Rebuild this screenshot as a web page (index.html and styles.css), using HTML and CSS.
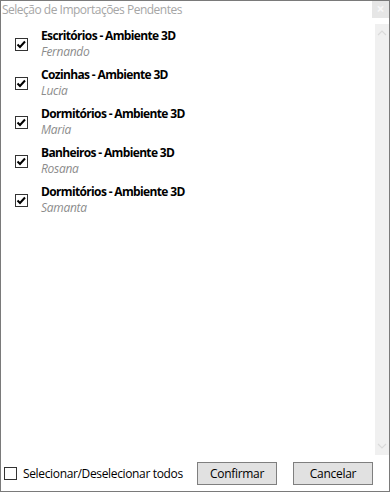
FILE: index.html
```html
<!DOCTYPE html>
<html lang="pt">
<head>
<meta charset="utf-8">
<title>Seleção de Importações Pendentes</title>
<link rel="stylesheet" href="styles.css">
</head>
<body>
<div class="window">
  <div class="titlebar">
    <div class="title">Seleção de Importações Pendentes</div>
    <div class="close">×</div>
  </div>
  <div class="content">
    <div class="list">
      <div class="item">
        <span class="cb checked"><svg viewBox="0 0 13 13" width="13" height="13"><polyline points="2.5,6.5 5,9 10,3.5" /></svg></span>
        <div class="texts"><div class="name">Escritórios - Ambiente 3D</div><div class="user">Fernando</div></div>
      </div>
      <div class="item">
        <span class="cb checked"><svg viewBox="0 0 13 13" width="13" height="13"><polyline points="2.5,6.5 5,9 10,3.5" /></svg></span>
        <div class="texts"><div class="name">Cozinhas - Ambiente 3D</div><div class="user">Lucia</div></div>
      </div>
      <div class="item">
        <span class="cb checked"><svg viewBox="0 0 13 13" width="13" height="13"><polyline points="2.5,6.5 5,9 10,3.5" /></svg></span>
        <div class="texts"><div class="name">Dormitórios - Ambiente 3D</div><div class="user">Maria</div></div>
      </div>
      <div class="item">
        <span class="cb checked"><svg viewBox="0 0 13 13" width="13" height="13"><polyline points="2.5,6.5 5,9 10,3.5" /></svg></span>
        <div class="texts"><div class="name">Banheiros - Ambiente 3D</div><div class="user">Rosana</div></div>
      </div>
      <div class="item">
        <span class="cb checked"><svg viewBox="0 0 13 13" width="13" height="13"><polyline points="2.5,6.5 5,9 10,3.5" /></svg></span>
        <div class="texts"><div class="name">Dormitórios - Ambiente 3D</div><div class="user">Samanta</div></div>
      </div>
    </div>
    <div class="scrollbar">
      <svg class="arrow" viewBox="0 0 14 10" width="14" height="10"><polyline points="3,7 7,3 11,7" /></svg>
      <svg class="arrow" viewBox="0 0 14 10" width="14" height="10"><polyline points="3,3 7,7 11,3" /></svg>
    </div>
  </div>
  <div class="footer">
    <label class="all"><span class="cb"></span><span>Selecionar/Deselecionar todos</span></label>
    <div class="buttons">
      <button class="btn">Confirmar</button>
      <button class="btn">Cancelar</button>
    </div>
  </div>
</div>
</body>
</html>
```
FILE: styles.css
```css
html, body {
  margin: 0;
  padding: 0;
  background: #ffffff;
}
.window {
  width: 390px;
  height: 492px;
  box-sizing: border-box;
  border: 1px solid #7a7a7a;
  background: #ffffff;
  display: flex;
  flex-direction: column;
  font-family: "Open Sans", "Noto Sans", sans-serif;
  font-size: 12px;
  color: #000;
}
.titlebar {
  display: flex;
  justify-content: space-between;
  align-items: flex-start;
  height: 22px;
  flex: none;
}
.title {
  color: #a6a6a6;
  line-height: 16px;
  padding: 1px 0 0 1px;
  letter-spacing: -0.5px;
}
.close {
  width: 17px;
  height: 17px;
  background: #e6e6e6;
  color: #f7f7f7;
  font-size: 14px;
  line-height: 16px;
  text-align: center;
  font-weight: bold;
}
.content {
  flex: 1;
  display: flex;
  min-height: 0;
}
.list {
  flex: 1;
  display: flex;
  flex-direction: column;
  gap: 7px;
  padding: 5px 0 0 14px;
}
.item {
  display: flex;
  align-items: center;
  gap: 13px;
}
.cb {
  width: 13px;
  height: 13px;
  box-sizing: border-box;
  border: 1px solid #333333;
  background: #fff;
  display: inline-flex;
  flex: none;
}
.cb svg {
  margin: -1px;
}
.cb polyline {
  fill: none;
  stroke: #000;
  stroke-width: 2;
}
.texts {
  display: flex;
  flex-direction: column;
}
.name {
  font-weight: bold;
  line-height: 16px;
  letter-spacing: -0.65px;
}
.user {
  font-style: italic;
  color: #8c8c8c;
  line-height: 16px;
  letter-spacing: -0.3px;
}
.scrollbar {
  width: 14px;
  margin-top: 1px;
  margin-bottom: 1px;
  background: #f0f0f0;
  display: flex;
  flex-direction: column;
  justify-content: space-between;
  padding: 4px 0;
}
.arrow polyline {
  fill: none;
  stroke: #dadada;
  stroke-width: 1.2;
}
.footer {
  flex: none;
  height: 35px;
  display: flex;
  align-items: center;
  justify-content: space-between;
  padding: 0 16px 0 3px;
}
.all {
  display: flex;
  align-items: center;
  gap: 6px;
  letter-spacing: -0.35px;
}
.all .cb {
  border-color: #333;
}
.buttons {
  display: flex;
  gap: 16px;
}
.btn {
  width: 80px;
  height: 23px;
  box-sizing: border-box;
  border: 1px solid #7f7f7f;
  background: #e1e1e1;
  font-family: "Open Sans", "Noto Sans", sans-serif;
  font-size: 12px;
  color: #000;
  padding: 0;
  letter-spacing: -0.3px;
}
```
